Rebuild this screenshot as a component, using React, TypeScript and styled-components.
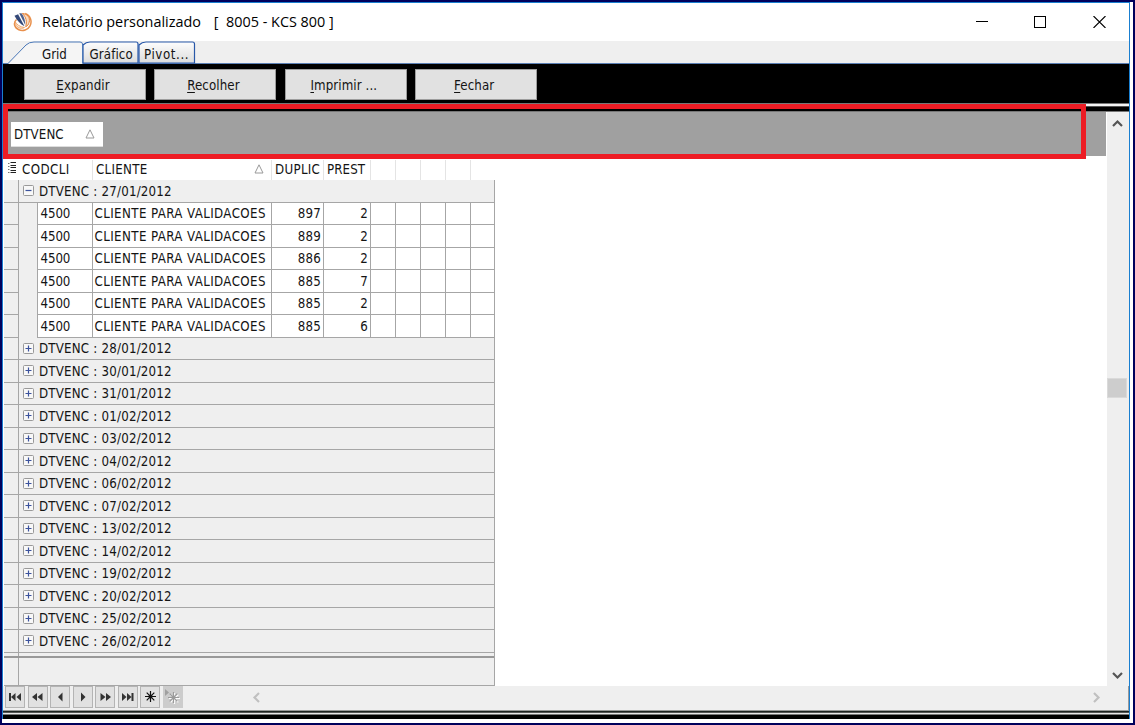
import React from "react";
import styled, { createGlobalStyle, css } from "styled-components";

const GlobalStyle = createGlobalStyle`
  *, *::before, *::after { box-sizing: border-box; }
  html, body { margin: 0; padding: 0; }
  body { overflow: hidden; }
`;

const LINE = "#a6a6a6";
const FACE = "#efefef";

const Desktop = styled.div`
  width: 1135px;
  height: 725px;
  padding: 2px 2px 2px 2px;
  background: #00005c;
  font: 13.2px/16px "DejaVu Sans Condensed", "DejaVu Sans", sans-serif;
  color: #141414;
`;

const Backdrop = styled.div`
  height: 721px;
  padding: 0 3px 4px 0;
  background: #fff;
`;

const WindowFrame = styled.div`
  position: relative;
  display: flex;
  flex-direction: column;
  width: 1128px;
  height: 717px;
  border: solid #1a7fd0;
  border-width: 1px 1px 0 1px;
  background: #fff;
`;

const TitleBar = styled.header`
  display: flex;
  align-items: center;
  flex: 0 0 38px;
  padding-left: 10px;
  background: #fff;
`;

const Title = styled.h1`
  flex: 1;
  margin: 0 0 0 9px;
  font: 400 14.4px/20px "Open Sans", "Noto Sans", sans-serif;
  color: #000;
  white-space: pre;
`;

const Caption = styled.span<{ $gap?: number }>`
  margin-left: ${(p) => p.$gap ?? 0}px;
`;

const WindowControls = styled.div`
  display: flex;
  gap: 46px;
  padding-right: 23px;
  svg:last-child { margin-left: 1px; }
`;

const TabStrip = styled.nav`
  position: relative;
  display: flex;
  flex: 0 0 23px;
  background: ${FACE};
  border-bottom: 1px solid #5b7fb4;
`;

const TabOutline = styled.svg`
  position: absolute;
  left: 0;
  top: 0;
`;

const TabLabel = styled.span<{ $width: number; $inset: number; $spacing?: number }>`
  position: relative;
  width: ${(p) => p.$width}px;
  padding: 6px 0 0 ${(p) => p.$inset}px;
  letter-spacing: ${(p) => p.$spacing ?? 0}px;
  white-space: nowrap;
`;

const Toolbar = styled.div`
  display: flex;
  flex: 0 0 39px;
  gap: 8.4px;
  padding: 5px 0 0 21px;
  background: #000;
`;

const ToolButton = styled.button`
  width: 122px;
  height: 31px;
  padding: 2px 4px 0 0;
  border: 1px solid #9d9d9d;
  background: #e1e1e1;
  color: #141414;
  font: inherit;
  letter-spacing: 0.1px;
  u { text-underline-offset: 2px; }
`;

const Splitter = styled.div`
  flex: 0 0 9px;
  background: linear-gradient(#777 0 1px, #f4f4f4 1px 3px, #555 3px 4px, #000 4px 8px, #777 8px 9px);
`;

const Workspace = styled.main`
  display: flex;
  flex: 0 0 573px;
  border-right: 1px solid #9a9a9a;
`;

const GridArea = styled.section`
  display: flex;
  flex-direction: column;
  flex: 0 0 1103px;
  padding-left: 1px;
  background: #fff;
`;

const GroupPanel = styled.div`
  flex: 0 0 44px;
  padding: 10px 0 0 7px;
  background: #a0a0a0;
`;

const GroupChip = styled.div`
  display: flex;
  align-items: center;
  justify-content: space-between;
  width: 92px;
  height: 25px;
  padding: 1px 8px 0 3px;
  background: #fff;
  border-bottom: 1px solid #ddd;
  letter-spacing: 0.1px;
  svg { margin-top: -2px; }
`;

const Table = styled.div`
  width: 491px;
`;

const HeaderRow = styled.div`
  display: flex;
  height: 24px;
  padding-top: 4px;
`;

const HeaderMark = styled.div`
  flex: 0 0 15px;
  padding: 1px 0 0 4px;
`;

const HeaderCell = styled.div<{ $width: number; $last?: boolean; $spacing?: number }>`
  display: flex;
  align-items: center;
  justify-content: space-between;
  flex: 0 0 ${(p) => p.$width}px;
  padding: 0 0 1px 3px;
  white-space: nowrap;
  letter-spacing: ${(p) => p.$spacing ?? 0.3}px;
  border-right: ${(p) => (p.$last ? 0 : 1)}px solid #e4e4e4;
  svg { margin: -2px 7px 0 0; }
`;

const Row = styled.div`
  display: flex;
  height: 22.5px;
  border-right: 1px solid ${LINE};
  background: ${FACE};
`;

const Indicator = styled.div`
  width: 15px;
  border-right: 1px solid ${LINE};
  border-bottom: 1px solid ${LINE};
`;

const GroupCell = styled.div`
  display: flex;
  align-items: center;
  flex: 1;
  gap: 5px;
  padding: 2px 0 0 4px;
  border-bottom: 1px solid ${LINE};
  white-space: pre;
  letter-spacing: 0.2px;
  svg { margin-top: -2px; }
`;

const Indent = styled.div`
  width: 18px;
  background: ${FACE};
`;

const alignEnd = css`
  justify-content: flex-end;
`;

const Cell = styled.div<{ $width: number; $first?: boolean; $right?: boolean; $spacing?: number; $last?: boolean }>`
  display: flex;
  align-items: center;
  ${(p) => p.$right && alignEnd}
  flex: 0 0 ${(p) => p.$width}px;
  padding: 2px 2px 0 ${(p) => (p.$first ? 2.5 : 1.5)}px;
  letter-spacing: ${(p) => p.$spacing ?? -0.1}px;
  white-space: nowrap;
  background: #fff;
  border-bottom: 1px solid ${LINE};
  border-left: ${(p) => (p.$first ? 1 : 0)}px solid ${LINE};
  border-right: ${(p) => (p.$last ? 0 : 1)}px solid ${LINE};
`;

const Footer = styled.div`
  display: flex;
  width: 491px;
  height: 33px;
  background: ${FACE};
  border-right: 1px solid ${LINE};
  border-bottom: 1px solid ${LINE};
`;

const FooterStub = styled.div`
  width: 15px;
  border-right: 1px solid ${LINE};
`;

const FooterBody = styled.div`
  flex: 1;
  border-top: 2px solid #999;
  margin-top: 3px;
  margin-left: -15px;
`;

const VScroll = styled.aside`
  display: flex;
  flex-direction: column;
  align-items: center;
  justify-content: space-between;
  flex: 1;
  padding: 6px 2px 5px 0;
  border-left: 1px solid #fff;
  background: ${FACE};
`;

const VThumb = styled.div`
  width: 20px;
  height: 20px;
  margin-top: -22px;
  background: #cdcdcd;
  border: 1px solid #dadada;
`;

const NavBar = styled.div`
  display: flex;
  align-items: flex-start;
  flex: 0 0 24px;
  padding-left: 2px;
  gap: 2.5px;
  background: ${FACE};
  border-right: 1px solid #9a9a9a;
`;

const NavButton = styled.button<{ $disabled?: boolean }>`
  display: flex;
  align-items: center;
  justify-content: center;
  width: 20px;
  height: 22px;
  padding: 0;
  border: 1px solid ${(p) => (p.$disabled ? "#cccccc" : "#b4b4b4")};
  background: ${(p) => (p.$disabled ? "#cccccc" : "#e1e1e1")};
`;

const HScroll = styled.div`
  display: flex;
  flex: 1;
  align-items: center;
  justify-content: space-between;
  height: 23px;
  padding: 0 26px 0 66px;
`;

const BottomEdge = styled.div`
  flex: 1;
  background: linear-gradient(#999 0 1px, #1c2420 1px 2px, #555 2px 3px, #e8e8e8 3px 4px, #777 4px 5px, #000 5px);
`;

const Highlight = styled.div`
  position: absolute;
  left: 0;
  top: 101px;
  width: 1083px;
  height: 55px;
  border: 5px solid #ed1c24;
`;

const SortMark = () => (
  <svg width="10" height="10" viewBox="0 0 10 10" fill="none" stroke="#999" strokeWidth="1">
    <path d="M5 .8L9 9H1Z" />
  </svg>
);

const Expander = ({ open }: { open?: boolean }) => (
  <svg width="11" height="11" viewBox="0 0 11 11" fill="none">
    <rect x=".5" y=".5" width="10" height="10" rx="1" fill="#f8f8f8" stroke="#999" />
    <path d={open ? "M2.5 5.5H8.5" : "M2.5 5.5H8.5M5.5 2.5V8.5"} stroke="#3b529d" strokeWidth="1.2" />
  </svg>
);

const AppLogo = () => (
  <svg width="20" height="20" viewBox="0 0 20 20" fill="none">
    <path d="M3.500 7.500C-.2 11 1.500 16 5.800 17.700c4 1.700 9.300.2 11.200-3.800C19.400 9.300 17.500 3.500 12.200 1.500" stroke="#e9904c" strokeWidth="1.500" />
    <path d="M9.300 1.500C14.500 1.900 17.300 5.500 16.200 10.200c-.6 2.300-1.800 3.800-3.500 4.600C14.200 9.500 13.200 5.200 9.300 1.500Z" fill="#fbdcc2" stroke="#e58339" />
    <path d="M2 9.500c1.600 3 4.800 5.400 9.500 6-3.500 2.100-9 .4-9.500-6Z" fill="#fbe3cf" stroke="#ee9b58" strokeWidth=".8" />
    <path d="M1.500 3.800l3.600-1.600 6.400 12C7.400 12.300 4 8.600 1.500 3.800Z" fill="#344878" />
    <path d="M6.200 1.300l2.300-.1c2.600 3.300 3.900 7.400 3.700 11.800Z" fill="#4d618d" />
  </svg>
);

const Chevron = ({ d, tone }: { d: string; tone: string }) => (
  <svg width="11" height="11" viewBox="0 0 11 11" fill="none" stroke={tone} strokeWidth="2.2">
    <path d={d} />
  </svg>
);

const NAV_GLYPHS = [
  "M0 1V9H2V1ZM6.500 1V9L2 5ZM12 1V9L7.500 5Z",
  "M6 1V9L1 5ZM11.500 1V9L6.500 5Z",
  "M8.500 .5V9.500L4 5Z",
  "M5 .5V9.500L9.500 5Z",
  "M1.500 1V9L6.500 5ZM7 1V9L12 5Z",
  "M1 1V9L5.500 5ZM6 1V9L10.500 5ZM10.500 1V9H12.500V1Z",
];

const Star = ({ tone }: { tone: string }) => (
  <g stroke={tone} strokeWidth="1.2">
    <path d="M6.500 0V11M1 5.500H12M2.700 1.700L10.300 9.300M10.300 1.700L2.700 9.300" />
    <circle cx="6.500" cy="5.500" r="2" fill={tone} stroke="none" />
  </g>
);

const duplicatas: [string, string][] = [
  ["897", "2"],
  ["889", "2"],
  ["886", "2"],
  ["885", "7"],
  ["885", "2"],
  ["885", "6"],
];

const datas = [
  "28/01/2012", "30/01/2012", "31/01/2012", "01/02/2012", "03/02/2012", "04/02/2012", "06/02/2012",
  "07/02/2012", "13/02/2012", "14/02/2012", "19/02/2012", "20/02/2012", "25/02/2012", "26/02/2012",
];

const GroupRow = ({ date, open }: { date: string; open?: boolean }) => (
  <Row>
    <Indicator />
    <GroupCell>
      <Expander open={open} />
      <span>DTVENC : {date}</span>
    </GroupCell>
  </Row>
);

export default function App() {
  return (
    <Desktop>
      <GlobalStyle />
      <Backdrop>
        <WindowFrame>
          <TitleBar>
            <AppLogo />
            <Title>
              <Caption>Relatório personalizado</Caption>
              <Caption $gap={13}>[  8005 - KCS 800 ]</Caption>
            </Title>
            <WindowControls>
              <svg width="12" height="12" viewBox="0 0 12 12"><path d="M0 5.500H12" stroke="#000" /></svg>
              <svg width="12" height="12" viewBox="0 0 12 12" fill="none"><rect x=".5" y=".5" width="11" height="11" stroke="#000" /></svg>
              <svg width="13" height="12" viewBox="0 0 13 12"><path d="M.5 0L12.500 12M12.500 0L.5 12" stroke="#000" strokeWidth="1.100" /></svg>
            </WindowControls>
          </TitleBar>
          <TabStrip>
            <TabOutline width="200" height="23" viewBox="0 0 200 23" fill="none">
              <defs>
                <linearGradient id="tabFace" x1="0" y1="0" x2="0" y2="1">
                  <stop offset="0" stopColor="#fdfdfd" />
                  <stop offset="1" stopColor="#dcdcdc" />
                </linearGradient>
              </defs>
              <path d="M80 22V4Q83 1 87 1H133Q135 1 135 3V22Z" fill="url(#tabFace)" stroke="#2858a8" strokeWidth="1.200" />
              <path d="M136 22V4Q139 1 143 1H189.500Q191.500 1 191.500 3V22Z" fill="url(#tabFace)" stroke="#2858a8" strokeWidth="1.200" />
              <path d="M5 23L23 4Q26 1 31 1H77Q79.500 1 79.500 3V23Z" fill="#f5f5f5" />
              <path d="M5 22.500L23 4Q26 1 31 1H77Q79.500 1 79.500 3V22.500" stroke="#4a78b8" />
            </TabOutline>
            <TabLabel $width={81} $inset={39}>Grid</TabLabel>
            <TabLabel $width={56} $inset={5.5} $spacing={0.1}>Gráfico</TabLabel>
            <TabLabel $width={58} $inset={4} $spacing={0.6}>Pivot...</TabLabel>
          </TabStrip>
          <Toolbar>
            <ToolButton><u>E</u>xpandir</ToolButton>
            <ToolButton><u>R</u>ecolher</ToolButton>
            <ToolButton><u>I</u>mprimir ...</ToolButton>
            <ToolButton><u>F</u>echar</ToolButton>
          </Toolbar>
          <Splitter />
          <Workspace>
            <GridArea>
              <GroupPanel>
                <GroupChip>DTVENC <SortMark /></GroupChip>
              </GroupPanel>
              <Table>
                <HeaderRow>
                  <HeaderMark>
                    <svg width="9" height="13" viewBox="0 0 9 13" stroke="#222" fill="none">
                      <path d="M2.500 1.500H8M2.500 4.500H8M2.500 6.500H8M2.500 9.500H8M2.500 11.500H8" />
                      <path d="M0 2.500H1.500M0 5.500H1.500M0 8.500H1.500M0 11.500H1.500" stroke="#777" />
                    </svg>
                  </HeaderMark>
                  <HeaderCell $width={74} $spacing={0.4}>CODCLI</HeaderCell>
                  <HeaderCell $width={179}>CLIENTE <SortMark /></HeaderCell>
                  <HeaderCell $width={52}>DUPLIC</HeaderCell>
                  <HeaderCell $width={47} $spacing={0.1}>PREST</HeaderCell>
                  <HeaderCell $width={25} />
                  <HeaderCell $width={25} />
                  <HeaderCell $width={25} />
                  <HeaderCell $width={25} />
                  <HeaderCell $width={24} $last />
                </HeaderRow>
                <GroupRow date="27/01/2012" open />
                {duplicatas.map(([duplic, prest], i) => (
                  <Row key={i}>
                    <Indicator />
                    <Indent />
                    <Cell $width={56} $first>4500</Cell>
                    <Cell $width={179} $spacing={0.4}>CLIENTE PARA VALIDACOES</Cell>
                    <Cell $width={52} $right $spacing={0.2}>{duplic}</Cell>
                    <Cell $width={47} $right $spacing={0.2}>{prest}</Cell>
                    <Cell $width={25} />
                    <Cell $width={25} />
                    <Cell $width={25} />
                    <Cell $width={25} />
                    <Cell $width={23} $last />
                  </Row>
                ))}
                {datas.map((d) => (
                  <GroupRow key={d} date={d} />
                ))}
              </Table>
              <Footer>
                <FooterStub />
                <FooterBody />
              </Footer>
            </GridArea>
            <VScroll>
              <Chevron d="M1 8L5.500 3.500L10 8" tone="#555" />
              <VThumb />
              <Chevron d="M1 3L5.500 7.500L10 3" tone="#555" />
            </VScroll>
          </Workspace>
          <NavBar>
            {NAV_GLYPHS.map((d) => (
              <NavButton key={d}>
                <svg width="13" height="10" viewBox="0 0 13 10" fill="#333"><path d={d} /></svg>
              </NavButton>
            ))}
            <NavButton>
              <svg width="13" height="11" viewBox="0 0 13 11"><Star tone="#111" /></svg>
            </NavButton>
            <NavButton $disabled>
              <svg width="17" height="15" viewBox="0 0 17 15">
                <path d="M1 0V7L5 3.500Z" fill="#a0a0a0" />
                <g transform="translate(4 4)"><Star tone="#fff" /></g>
                <g transform="translate(3 3)"><Star tone="#9a9a9a" /></g>
              </svg>
            </NavButton>
            <HScroll>
              <Chevron d="M8 1L3.500 5.500L8 10" tone="#c0c0c0" />
              <Chevron d="M3 1L7.500 5.500L3 10" tone="#c0c0c0" />
            </HScroll>
          </NavBar>
          <BottomEdge />
          <Highlight />
        </WindowFrame>
      </Backdrop>
    </Desktop>
  );
}
